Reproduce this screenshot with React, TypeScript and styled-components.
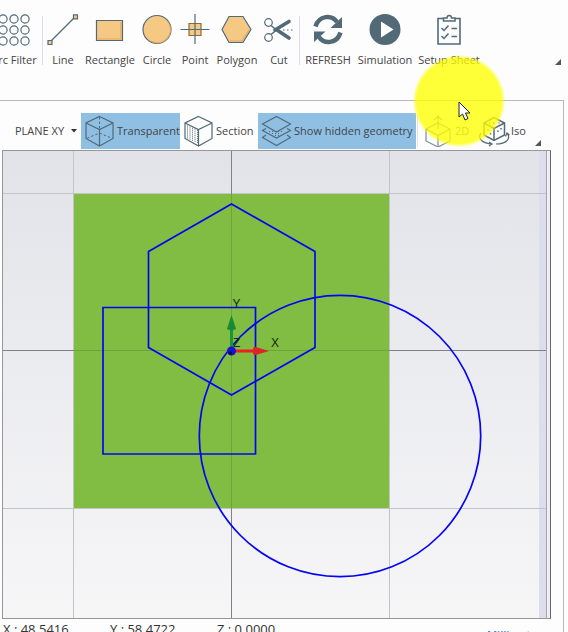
import React from "react";
import styled, { createGlobalStyle, css } from "styled-components";

const GlobalStyle = createGlobalStyle`
  * { box-sizing: border-box; }
  body {
    margin: 0;
    background: #fdfdfd;
    color: #444;
    font-family: "Open Sans", "Noto Sans", sans-serif;
    font-size: 11px;
    line-height: 16px;
  }
  svg { display: block; flex: none; }
`;

const INK = "#526a77";
const SAND = "#f5c984";

const Page = styled.div`
  position: relative;
  height: 100vh;
  overflow: hidden;
  display: flex;
  flex-direction: column;
`;

const Ribbon = styled.header`
  display: flex;
  align-items: flex-start;
  height: 100px;
  flex: none;
  padding: 14px 7px 0 0;
`;

const ToolButton = styled.button<{ $width: number; $cut?: boolean }>`
  width: ${(p) => p.$width}px;
  margin-left: ${(p) => (p.$cut ? -14 : 0)}px;
  flex: none;
  display: flex;
  flex-direction: column;
  align-items: center;
  gap: 6px;
  padding: 0;
  border: 0;
  background: none;
  color: inherit;
  font: inherit;
  white-space: nowrap;
`;

const Divider = styled.span<{ $gap?: number }>`
  width: 1px;
  height: 49px;
  flex: none;
  margin: 2px 0 0 ${(p) => p.$gap ?? 0}px;
  background: #dcdce6;
`;

const ViewDivider = styled.span`
  width: 1px;
  height: 32px;
  flex: none;
  margin: 2px 1px 0;
  background: #e4e4ea;
`;

const Launcher = styled.button<{ $top: number; $right?: number }>`
  align-self: flex-start;
  margin: ${(p) => p.$top}px ${(p) => p.$right ?? 0}px 0 auto;
  padding: 0;
  border: 0;
  background: none;
`;

const Panel = styled.main`
  flex: 1;
  display: flex;
  flex-direction: column;
  margin-right: 4px;
  padding: 12px 12px 0 2px;
  border: solid #b9b9bb;
  border-width: 1px 1px 0 0;
`;

const ViewBar = styled.nav`
  display: flex;
  height: 37px;
  flex: none;
`;

const PlanePicker = styled.label`
  position: relative;
  display: flex;
  align-items: center;
  width: 66px;
  height: 36px;
  margin: 0 0 0 13px;
  flex: none;
`;

const PlaneSelect = styled.select`
  appearance: none;
  width: 100%;
  padding: 0;
  border: 0;
  background: none;
  color: inherit;
  font: inherit;
`;

const Caret = styled.svg`
  position: absolute;
  right: 4px;
  pointer-events: none;
`;

const ViewButton = styled.button<{ $width: number; $active?: boolean }>`
  width: ${(p) => p.$width}px;
  height: 36px;
  flex: none;
  display: flex;
  align-items: center;
  gap: 1px;
  padding: 0 0 0 3px;
  border: 0;
  background: none;
  color: inherit;
  font: inherit;
  white-space: nowrap;
  ${(p) =>
    p.$active &&
    css`
      background: #8fc0e4;
    `}
  &:disabled {
    opacity: 0.75;
  }
`;

const Viewport = styled.section`
  height: 469px;
  flex: none;
  border: 1px solid #97979b;
  border-right-color: #66666a;
  background: linear-gradient(#e2e3e9, #f6f6f7);
  overflow: hidden;
`;

const Drawing = styled.svg`
  width: 100%;
  height: 467px;
`;

const AxisText = styled.text`
  font-family: "Liberation Sans", sans-serif;
  font-size: 12px;
  fill: #14280c;
`;

const StatusBar = styled.footer`
  display: flex;
  font-size: 13px;
  padding: 2px 0 0 1px;
  height: 13px;
  overflow: hidden;
  color: #333;
  white-space: nowrap;
`;

const Coordinate = styled.span`
  width: 107px;
`;

const Units = styled.a`
  margin: 6px 4px 0 auto;
  color: #3d7edb;
  font-size: 11px;
  font-weight: 600;
  text-decoration: none;
`;

const Spotlight = styled.div`
  position: absolute;
  left: 413px;
  top: 55px;
  width: 92px;
  height: 92px;
  border-radius: 50%;
  background: radial-gradient(closest-side, rgba(255, 255, 0, 0.78) 92%, rgba(255, 255, 0, 0.1) 100%);
  pointer-events: none;
`;

const Pointer = styled.svg`
  position: absolute;
  left: 458px;
  top: 101px;
  pointer-events: none;
`;

const Icon = ({ size = 32, children }: { size?: number; children: React.ReactNode }) => (
  <svg width={size} height="32" viewBox={`0 0 ${size} 32`} fill="none" stroke={INK} strokeWidth="1.2" aria-hidden="true">
    {children}
  </svg>
);

const ArcFilterIcon = () => (
  <Icon>
    {[5, 16, 27].flatMap((y) => [5, 16, 27].map((x) => <circle key={`${x}-${y}`} cx={x} cy={y} r="4.1" />))}
  </Icon>
);

const LineIcon = () => (
  <Icon>
    <path d="M4 27 28 3" />
    <path d="M1 26.500h4v4h-4zM26.500 .8h4v4h-4z" fill={SAND} />
  </Icon>
);

const RectangleIcon = () => (
  <Icon>
    <path d="M2.500 6.500h26v20h-26z" fill={SAND} />
    <path d="M27 8v17H4" stroke="#e5a95e" />
  </Icon>
);

const CircleIcon = () => (
  <Icon>
    <circle cx="16" cy="15.500" r="14" fill={SAND} />
    <path d="M27 8a13 13 0 0 1-17 19" stroke="#dda866" />
  </Icon>
);

const PointIcon = () => (
  <Icon>
    <path d="M10 9.500h12v12H10z" fill={SAND} stroke="#8b6b3e" />
    <path d="M16 0v30M1.500 15.500h29" />
  </Icon>
);

const PolygonIcon = () => (
  <Icon>
    <path d="M1 15.500 8 2.500h14l8 13-8 13H8z" fill={SAND} />
    <path d="m28 16-7 11H9" stroke="#dda866" />
  </Icon>
);

const CutIcon = () => (
  <Icon>
    <circle cx="5.500" cy="8.500" r="3.800" />
    <circle cx="5.500" cy="23.500" r="3.800" />
    <path d="m8 11.500 5 4M8 20.500l5-4" strokeWidth="1.600" />
    <path d="m12 16 14-8.500" strokeWidth="3.600" strokeLinecap="round" />
    <path d="m14 16 12 8" strokeWidth="3.600" strokeLinecap="round" />
    <path d="M20 16h12" strokeDasharray="1.500 2.500" />
  </Icon>
);

const RefreshIcon = () => (
  <Icon>
    <path d="M3.500 12.500C7 1 20 .5 25 8" strokeWidth="4.500" />
    <path d="M30 3v11H18.500z" fill={INK} stroke="none" />
    <path d="M28.500 18.500C25 30 12 30.500 7 23" strokeWidth="4.500" />
    <path d="M2 28V17.500h11.500z" fill={INK} stroke="none" />
  </Icon>
);

const SimulationIcon = () => (
  <Icon>
    <circle cx="16" cy="15.500" r="15.500" fill={INK} stroke="none" />
    <path d="M12 7.500v16l12.500-8z" fill="#fdfdfd" stroke="none" />
  </Icon>
);

const SetupSheetIcon = () => (
  <Icon>
    <path d="M10 4.500H5V30h22V4.500h-5" strokeWidth="1.600" />
    <path d="M10.500 7V4H14c0-3.500 4.500-3.500 4.500 0H22v3z" strokeWidth="1.500" />
    <path d="m8.500 14 2.500 2.500 4.500-5M8.500 22l2.500 2.500 4.500-5M18.500 14.500H24M18.500 22.500H24" strokeWidth="1.500" />
  </Icon>
);

const CubeOutline = () => <path d="M15.500 1.500 29 8v15.500L15.500 31 2 23.500V8z" />;

const TransparentIcon = () => (
  <Icon>
    <CubeOutline />
    <path d="m2 8 13.500 6.500L29 8M15.500 14.500V31" />
    <path d="M15.500 2v16L2.500 23.500M15.500 18l13 5.500" strokeDasharray="2.500 2" strokeWidth="1" />
  </Icon>
);

const dots = Array.from({ length: 35 }, (_, i) => ({
  x: 4 + (i % 5) * 2.5,
  y: 11 + Math.floor(i / 5) * 2 + (i % 5) * 1.1,
}));

const SectionIcon = () => (
  <Icon>
    <CubeOutline />
    <path d="m2 8 13.500 6.500L29 8M15.500 14.500V31" />
    {dots.map((d) => (
      <path key={`${d.x}-${d.y}`} d={`M${d.x} ${d.y}h1`} strokeWidth="1" />
    ))}
  </Icon>
);

const LayersIcon = () => (
  <Icon>
    <path d="M15.500 1.500 29.500 9l-14 8L1.500 9z" />
    <path d="m5 13.500-3.500 2 14 7.500 14-7.500-3.500-2M5 20l-3.500 2.500 14 8 14-8L26 20" />
    <path d="M8 16.500h15M11 18.500h9M14 20.500h4" strokeDasharray="1 2" strokeWidth="1" />
  </Icon>
);

const TwoDIcon = () => (
  <Icon>
    <path d="m4 14 12-6 12 6v12l-12 6-12-6z" />
    <path d="m4 14 12 6.500L28 14M16 20.500V32M16 14V1m-4 4 4-4 4 4" />
  </Icon>
);

const IsoIcon = () => (
  <Icon>
    <path d="m6 8 10-5.500L26.500 8v12L16 25.500 6 20z" strokeWidth="1.500" />
    <path d="m6 8 10 5.500L26.500 8M16 13.500v12" strokeWidth="1.500" />
    <path d="M10 14v1.500M12.500 18v1.500M20 15.500V17M23 13v1.500M15 8h1.500M11 8h1M20.500 8h1" strokeWidth="1.500" />
    <path d="M3 18C-1 24 5 28.500 14 29m-3-2 3 2-3 2M18 29c10 0 15.500-5 11-11m-1.500 3.500 1.500-3.500 2.500 2" />
  </Icon>
);

const LauncherMark = () => (
  <svg width="6" height="6" viewBox="0 0 6 6" aria-hidden="true">
    <path d="M6 0v6H0z" fill="#555" />
  </svg>
);

export default function App() {
  return (
    <>
      <GlobalStyle />
      <Page>
        <Ribbon>
          <ToolButton $width={56} $cut><ArcFilterIcon />Arc Filter</ToolButton>
          <Divider />
          <ToolButton $width={40}><LineIcon />Line</ToolButton>
          <ToolButton $width={54}><RectangleIcon />Rectangle</ToolButton>
          <ToolButton $width={40}><CircleIcon />Circle</ToolButton>
          <ToolButton $width={36}><PointIcon />Point</ToolButton>
          <ToolButton $width={48}><PolygonIcon />Polygon</ToolButton>
          <ToolButton $width={36}><CutIcon />Cut</ToolButton>
          <Divider $gap={2} />
          <ToolButton $width={56}><RefreshIcon />REFRESH</ToolButton>
          <ToolButton $width={58}><SimulationIcon />Simulation</ToolButton>
          <ToolButton $width={70}><SetupSheetIcon />Setup Sheet</ToolButton>
          <Launcher $top={45} aria-label="Ribbon options"><LauncherMark /></Launcher>
        </Ribbon>

        <Panel>
          <ViewBar>
            <PlanePicker>
              <PlaneSelect aria-label="Work plane" defaultValue="xy">
                <option value="xy">PLANE XY</option>
                <option value="xz">PLANE XZ</option>
                <option value="yz">PLANE YZ</option>
              </PlaneSelect>
              <Caret width="6" height="4" viewBox="0 0 6 4" aria-hidden="true">
                <path d="M0 0h6L3 3.500z" fill="#333" />
              </Caret>
            </PlanePicker>
            <ViewButton $width={99} $active aria-pressed="true"><TransparentIcon />Transparent</ViewButton>
            <ViewButton $width={78}><SectionIcon />Section</ViewButton>
            <ViewButton $width={158} $active aria-pressed="true"><LayersIcon />Show hidden geometry</ViewButton>
            <ViewDivider />
            <ViewButton $width={56} disabled><TwoDIcon />2D</ViewButton>
            <ViewButton $width={54}><IsoIcon />Iso</ViewButton>
            <Launcher $top={27} $right={10} aria-label="View options"><LauncherMark /></Launcher>
          </ViewBar>

          <Viewport aria-label="Drawing area">
            <Drawing viewBox="3 151 547 467" preserveAspectRatio="xMinYMin slice" fill="none">
              <path d="M539 151h7v467h-7z" fill="#dcdded" />
              <path d="M3 193.500h543M3 508.500h543M73.500 151v467M389.500 151v467" stroke="#c3c4c8" />
              <path d="M546.500 151v467" stroke="#a7a7ab" />
              <path d="M547 151h3v467h-3z" fill="#efeff1" />
              <path d="M3 350.500h543M231.500 151v467" stroke="#808086" />
              <path d="M74 194h315v314H74z" fill="#80bd42" />
              <path d="M74 350.500h315M231.500 194v314" stroke="#6da53a" />
              <g stroke="#0404f4" strokeWidth="1.700">
                <path d="M231.500 204 315 251.500v96L231.500 395 148.500 347.500v-96z" />
                <path d="M103 307.500h152.500V454H103z" />
                <circle cx="340" cy="436" r="140.700" />
              </g>
              <path d="M231.500 350V328" stroke="#1c9438" strokeWidth="3" />
              <path d="m231.500 315 4.500 14q-4.500 2.500-9 0z" fill="#178a35" />
              <path d="M235 351h20" stroke="#ee2020" strokeWidth="3" />
              <path d="m269 351-15 4.500q-2.500-4.500 0-9z" fill="#dc2626" />
              <circle cx="231.500" cy="351" r="4.500" fill="#1414e0" />
              <path d="M228 351.500h4v3.500q-4 0-4-3.500" fill="#101038" />
              <AxisText x="232.500" y="308">Y</AxisText>
              <AxisText x="271" y="347">X</AxisText>
              <AxisText x="233" y="347">Z</AxisText>
            </Drawing>
          </Viewport>

          <StatusBar>
            <Coordinate>X : 48.5416</Coordinate>
            <Coordinate>Y : 58.4722</Coordinate>
            <Coordinate>Z : 0.0000</Coordinate>
            <Units href="#units">Millimeters</Units>
          </StatusBar>
        </Panel>

        <Spotlight />
        <Pointer width="13" height="20" viewBox="0 0 13 20" aria-hidden="true">
          <path d="M1 1v15l3.500-3 2.500 6 3-1.500-2.500-5.500H12z" fill="#fff" stroke="#222" />
        </Pointer>
      </Page>
    </>
  );
}
